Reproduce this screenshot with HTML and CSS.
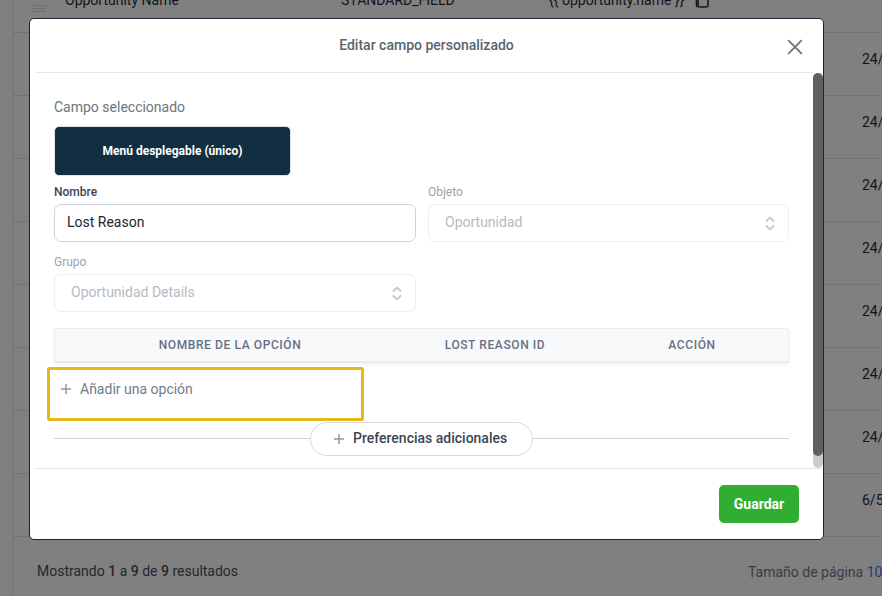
FILE: index.html
```html
<!DOCTYPE html>
<html lang="es">
<head>
<meta charset="utf-8">
<title>Editar campo personalizado</title>
<link rel="stylesheet" href="styles.css">
</head>
<body>
<div class="page">
  <div class="table">
    <div class="row row-first">
      <div class="cell-menu"><svg class="menu-icon" width="14" height="10" viewBox="0 0 14 10"><path d="M0 1.5h14M0 4.5h14M0 7.5h14"/></svg></div>
      <div>Opportunity Name</div>
      <div>STANDARD_FIELD</div>
      <div class="cell-key"><span>{{ opportunity.name }}</span><svg class="copy-icon" width="15" height="14" viewBox="0 0 15 14"><path d="M2.5 -4v9.5a2 2 0 0 0 1 1.5"/><rect x="4" y="-6" width="10" height="13" rx="2"/></svg></div>
      <div></div>
    </div>
    <div class="row"><div></div><div></div><div></div><div></div><div>24/</div></div>
    <div class="row"><div></div><div></div><div></div><div></div><div>24/</div></div>
    <div class="row"><div></div><div></div><div></div><div></div><div>24/</div></div>
    <div class="row"><div></div><div></div><div></div><div></div><div>24/</div></div>
    <div class="row"><div></div><div></div><div></div><div></div><div>24/</div></div>
    <div class="row"><div></div><div></div><div></div><div></div><div>24/</div></div>
    <div class="row"><div></div><div></div><div></div><div></div><div>24/</div></div>
    <div class="row"><div></div><div></div><div></div><div></div><div>6/5</div></div>
    <div class="pager">
      <div class="pager-count">Mostrando <b>1</b> a <b>9</b> de <b>9</b> resultados</div>
      <div class="pager-size">Tamaño de página <span class="pager-num">10</span></div>
    </div>
  </div>

  <div class="modal">
    <header class="modal-head">
      <h1 class="modal-title">Editar campo personalizado</h1>
      <button class="close" aria-label="Cerrar"><svg width="16" height="16" viewBox="0 0 16 16"><path d="M1.2 1.2l13.6 13.6M14.8 1.2L1.2 14.8"/></svg></button>
    </header>
    <div class="modal-body">
      <div class="content">
        <div class="selected-label">Campo seleccionado</div>
        <div class="type-card">Menú desplegable (único)</div>
        <div class="form-grid">
          <div class="field">
            <label class="label">Nombre</label>
            <div class="control control-active">Lost Reason</div>
          </div>
          <div class="field">
            <label class="label label-muted">Objeto</label>
            <div class="control control-muted"><span>Oportunidad</span><svg class="updown" width="10" height="15" viewBox="0 0 10 15"><path d="M1 5.5l4-4 4 4M1 9.5l4 4 4-4"/></svg></div>
          </div>
          <div class="field">
            <label class="label label-muted">Grupo</label>
            <div class="control control-muted"><span>Oportunidad Details</span><svg class="updown" width="10" height="15" viewBox="0 0 10 15"><path d="M1 5.5l4-4 4 4M1 9.5l4 4 4-4"/></svg></div>
          </div>
        </div>
        <div class="options-head">
          <div>Nombre de la opción</div>
          <div>Lost Reason ID</div>
          <div class="col-action">Acción</div>
        </div>
        <div class="add-box">
          <svg class="plus" width="10" height="10" viewBox="0 0 10 10"><path d="M5 0v10M0 5h10"/></svg>
          <span>Añadir una opción</span>
        </div>
        <div class="prefs">
          <button class="prefs-btn">
            <svg class="plus" width="10" height="10" viewBox="0 0 10 10"><path d="M5 0v10M0 5h10"/></svg>
            <span class="prefs-text">Preferencias adicionales</span>
          </button>
        </div>
      </div>
      <div class="scrollbar"><div class="thumb"></div></div>
    </div>
    <footer class="modal-foot">
      <button class="save">Guardar</button>
    </footer>
  </div>
</div>
</body>
</html>
```

FILE: styles.css
```css
* { box-sizing: border-box; }
html, body { margin: 0; padding: 0; }
body {
  font-family: Roboto, "Liberation Sans", sans-serif;
  font-size: 14px;
  color: #12141a;
  background: #808080;
}
.page {
  position: relative;
  width: 882px;
  height: 596px;
  overflow: hidden;
  background: #808080;
}
.table {
  margin-left: 12px;
  height: 596px;
  border-left: 1px solid #737373;
}
.row {
  display: grid;
  grid-template-columns: 52px 276px 208px 313px 1fr;
  height: 63px;
  padding-top: 17px;
  line-height: 18px;
  border-bottom: 1px solid #747474;
  white-space: nowrap;
}
.row-first {
  height: 33px;
  padding-top: 0;
}
.row-first > div { margin-top: -9px; }
.row-first > .cell-menu { margin-top: -8px; }
.cell-menu { padding: 8px 0 0 19px; }
.menu-icon path { fill: none; stroke: #6e6e6e; stroke-width: 1; }
.cell-key { display: flex; align-items: flex-start; gap: 10px; }
.copy-icon { margin-top: 9px; overflow: hidden; }
.copy-icon path, .copy-icon rect { fill: none; stroke: #16181d; stroke-width: 1.6; }
.pager {
  display: grid;
  grid-template-columns: 735px 1fr;
  padding-top: 25px;
  line-height: 18px;
  white-space: nowrap;
  overflow: hidden;
}
.pager-count { padding-left: 24px; color: #25272e; }
.pager-count b { font-weight: 500; }
.pager-size { color: #373c46; margin-top: 1px; }
.pager-num { color: #1d3a73; }

.modal {
  position: absolute;
  left: 29px;
  top: 18px;
  width: 795px;
  height: 522px;
  display: flex;
  flex-direction: column;
  background: #fff;
  border: 1px solid #1e2433;
  border-radius: 5px;
  overflow: hidden;
}
.modal-head {
  position: relative;
  flex: none;
  display: flex;
  align-items: center;
  justify-content: center;
  height: 54px;
  margin: 0 10px 0 6px;
  padding-bottom: 1px;
  border-bottom: 1px solid #e3e6ea;
}
.modal-title {
  margin: 0 0 1px;
  font-size: 14px;
  line-height: 20px;
  font-weight: 500;
  color: #58646e;
  padding-left: 4px;
}
.close {
  position: absolute;
  right: 10px;
  top: 20px;
  padding: 0;
  width: 16px;
  height: 16px;
  background: none;
  border: 0;
  display: block;
}
.close path { fill: none; stroke: #6a7a85; stroke-width: 1.9; }
.modal-body {
  flex: 1;
  min-height: 0;
  display: flex;
}
.content {
  flex: 1;
  min-width: 0;
  padding: 24px 24px 0 24px;
  overflow: hidden;
}
.selected-label {
  line-height: 20px;
  color: #6b7680;
}
.type-card {
  width: 237px;
  height: 50px;
  margin-top: 9px;
  display: flex;
  align-items: center;
  justify-content: center;
  background: #122f42;
  border: 1px solid #dfe3ea;
  border-radius: 5px;
  color: #fff;
  font-size: 12px;
  font-weight: 700;
}
.form-grid {
  display: grid;
  grid-template-columns: 362px 361px;
  column-gap: 12px;
  row-gap: 12px;
  margin-top: 8px;
}
.label {
  display: block;
  font-size: 12px;
  line-height: 16px;
  font-weight: 500;
  color: #3b4556;
  margin-bottom: 4px;
}
.label-muted { color: #9ca3ad; font-weight: 400; }
.control {
  height: 38px;
  display: flex;
  align-items: center;
  justify-content: space-between;
  padding: 0 13px 2px 12px;
  border-radius: 7px;
  border: 1px solid #cdd1dc;
}
.control-active { color: #1c2331; }
.control-muted {
  padding-left: 16px;
  border-color: #eceef2;
  color: #b4bac3;
}
.updown { margin-top: 3px; }
.updown path { fill: none; stroke: #c5cad2; stroke-width: 1.8; }
.options-head {
  display: grid;
  grid-template-columns: 350px 180px 1fr;
  align-items: center;
  height: 35px;
  margin-top: 16px;
  padding-bottom: 1px;
  text-align: center;
  text-transform: uppercase;
  font-size: 12px;
  font-weight: 500;
  letter-spacing: 0.6px;
  color: #667085;
  background: #f8f9fb;
  border: 1px solid #eceef2;
  border-bottom: 2px solid #e8eaee;
  box-shadow: 0 2px 3px rgba(30, 40, 60, 0.06);
}
.col-action { padding-left: 11px; }
.add-box {
  display: flex;
  align-items: flex-start;
  gap: 9px;
  width: 317px;
  height: 54px;
  margin: 4px 0 0 -7px;
  padding: 10px 0 0 11px;
  line-height: 18px;
  color: #707c88;
  border: 3px solid #e3b91c;
  border-radius: 2px;
}
.add-box .plus { margin-top: 4px; }
.plus path { fill: none; stroke: #8f97a8; stroke-width: 1.5; }
.prefs {
  position: relative;
  display: flex;
  justify-content: center;
  margin-top: 1px;
}
.prefs::before {
  content: "";
  position: absolute;
  left: 0;
  right: 0;
  top: 16px;
  border-top: 1px solid #cdd3dc;
}
.prefs-btn {
  position: relative;
  display: flex;
  align-items: center;
  gap: 9px;
  width: 223px;
  height: 34px;
  padding: 0 0 0 23px;
  background: #fff;
  border: 1px solid #d5d9e5;
  border-radius: 17px;
  font-family: inherit;
  font-size: 14px;
  font-weight: 500;
  color: #3b4556;
}
.prefs-text { margin-bottom: 2px; }
.scrollbar {
  flex: none;
  width: 10px;
  background: #cccccc;
  border-radius: 5px;
}
.thumb {
  height: 383px;
  background: #5f5f5f;
  border-radius: 5px;
}
.modal-foot {
  flex: none;
  display: flex;
  justify-content: flex-end;
  align-items: flex-start;
  height: 71px;
  margin-left: 6px;
  padding: 16px 24px 0 0;
  border-top: 1px solid #e3e6ea;
}
.save {
  width: 80px;
  height: 38px;
  background: #2fae32;
  border: 0;
  border-radius: 5px;
  color: #fff;
  font-family: inherit;
  font-size: 14px;
  font-weight: 700;
}
```
